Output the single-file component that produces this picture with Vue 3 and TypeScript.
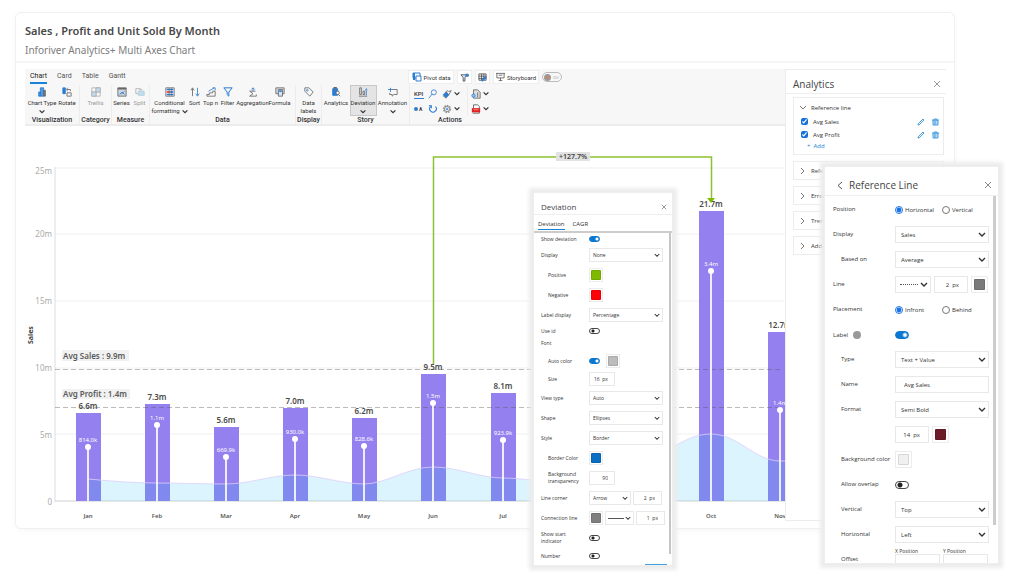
<script setup lang="ts">
import { ref } from 'vue'

interface Tool { icon: string; label: string; second?: string; width: string; more?: boolean; active?: boolean; muted?: boolean }
interface Group { title: string; size: string; tools: Tool[] }
interface Bar { month: string; x: number; top: number; sales: string; dot: number; profit: string }

const tabs = ['Chart', 'Card', 'Table', 'Gantt']

const groups: Group[] = [
  { title: 'Visualization', size: 'g-vis', tools: [
    { icon: 'chart', label: 'Chart Type', width: 'w30', more: true },
    { icon: 'rotate', label: 'Rotate', width: 'w20' } ] },
  { title: 'Category', size: 'g-cat', tools: [{ icon: 'trellis', label: 'Trellis', width: 'w30', muted: true }] },
  { title: 'Measure', size: 'g-mea', tools: [
    { icon: 'series', label: 'Series', width: 'w18' },
    { icon: 'split', label: 'Split', width: 'w18', muted: true } ] },
  { title: 'Data', size: 'g-data', tools: [
    { icon: 'cond', label: 'Conditional', second: 'formatting', width: 'w32', more: true },
    { icon: 'sort', label: 'Sort', width: 'w18' },
    { icon: 'topn', label: 'Top n', width: 'w14' },
    { icon: 'filter', label: 'Filter', width: 'w20' },
    { icon: 'sigma', label: 'Aggregation', width: 'w30' },
    { icon: 'formula', label: 'Formula', width: 'w24' } ] },
  { title: 'Display', size: 'g-dis', tools: [{ icon: 'tag', label: 'Data', second: 'labels', width: 'w24' }] },
  { title: 'Story', size: 'g-sto', tools: [
    { icon: 'analytics', label: 'Analytics', width: 'w27' },
    { icon: 'deviation', label: 'Deviation', width: 'w27', more: true, active: true },
    { icon: 'annotation', label: 'Annotation', width: 'w32', more: true } ] },
]

const ticks = [
  { y: 168, ly: 174, t: '25m' }, { y: 234, ly: 237, t: '20m' }, { y: 301, ly: 304, t: '15m' },
  { y: 368, ly: 371, t: '10m' }, { y: 434, ly: 438, t: '5m' }, { y: 501, ly: 505, t: '0' },
]

const bars: Bar[] = [
  { month: 'Jan', x: 88, top: 413, sales: '6.6m', dot: 447, profit: '814.0k' },
  { month: 'Feb', x: 157, top: 404, sales: '7.3m', dot: 425, profit: '1.1m' },
  { month: 'Mar', x: 226, top: 427, sales: '5.6m', dot: 457, profit: '669.9k' },
  { month: 'Apr', x: 295, top: 408, sales: '7.0m', dot: 439, profit: '930.0k' },
  { month: 'May', x: 364, top: 418, sales: '6.2m', dot: 446, profit: '828.6k' },
  { month: 'Jun', x: 433, top: 374, sales: '9.5m', dot: 403, profit: '1.5m' },
  { month: 'Jul', x: 503, top: 393, sales: '8.1m', dot: 440, profit: '923.9k' },
  { month: 'Oct', x: 711, top: 211, sales: '21.7m', dot: 271, profit: '3.4m' },
  { month: 'Nov', x: 780, top: 332, sales: '12.7m', dot: 410, profit: '1.4m' },
]

const curve = 'M88 479C110 481 135 483 157 483S204 484 226 484S272 475 295 475S342 484 364 484S408 467 433 467S480 478 503 478S550 484 572 482S618 476 641 466S684 434 711 434S755 461 780 461L800 461'

const closed = ['Reference band', 'Error bars', 'Trend line', 'Additional']
const position = ref('h')
const placement = ref('f')
</script>

<template>
  <div class="page">
    <main class="card">
      <header class="head">
        <h1>Sales , Profit and Unit Sold By Month</h1>
        <h2>Inforiver Analytics+ Multi Axes Chart</h2>
      </header>
      <div class="body">
        <section class="main">
          <div class="ribbon">
            <div class="ribbon-top">
              <nav class="tabs">
                <button v-for="(t, i) in tabs" :key="t" type="button" :class="{ on: i === 0 }">{{ t }}</button>
              </nav>
              <button class="chip wide" type="button">
                <svg width="10" height="10" viewBox="0 0 10 10"><path d="M1 1h7v5H1z" fill="#fff" stroke="#2b7cd3" /><path d="M1 1h2v7H1z" fill="#2b7cd3" /><path d="M4 4h5v5H4z" fill="#fff" stroke="#2b7cd3" /></svg>
                Pivot data
              </button>
              <button class="chip" type="button" aria-label="Filter data">
                <svg width="9" height="9" viewBox="0 0 10 10"><path d="M1 2h7L5.500 5v4h-2V5z" fill="#d8e8f8" stroke="#555" /><circle cx="8" cy="2.500" r="2" fill="#3b82c4" /></svg>
              </button>
              <button class="chip" type="button" aria-label="Edit table">
                <svg width="9" height="9" viewBox="0 0 10 10"><path d="M1 1h8v7H1zM1 3.500h8M1 6h8M4 1v7M6.500 1v7" fill="none" stroke="#555" /><path d="M4 9l5-5" stroke="#2b7cd3" stroke-width="2" /></svg>
              </button>
              <button class="chip wide" type="button">
                <svg width="9" height="10" viewBox="0 0 10 10"><path d="M0 1h10M1 1v5h8V1M5 6v3M3 9h4M3 3h4" fill="none" stroke="#666" /></svg>
                Storyboard
              </button>
              <button class="off" type="button" role="switch" aria-checked="false"><i></i>Off</button>
            </div>
            <div class="groups">
              <section v-for="g in groups" :key="g.title" class="group" :class="g.size">
                <div class="tools">
                  <button v-for="t in g.tools" :key="t.label" type="button" class="tool" :class="[t.width, { active: t.active, muted: t.muted }]">
                    <svg class="ico" viewBox="0 0 12 12" fill="none" stroke="#666">
                      <template v-if="t.icon === 'chart'"><path d="M2 6h2v5H2zM4 1h4v10H4z" fill="#4a9be0" stroke="#2b7cd3" /><path d="M8 4h2v7H8z" fill="#777" /></template>
                      <template v-else-if="t.icon === 'rotate'"><path d="M1 1h3v7H1z" fill="#2b7cd3" stroke="#2b7cd3" /><path d="M6 3h4v2M7 1L5 3l2 2M6 7h5v4H6z" /></template>
                      <template v-else-if="t.icon === 'trellis'"><path d="M1 1h10v10H1zM6 1v10M1 6h10" /><path d="M6 1h5v5H6zM1 6h5v5H1z" fill="#8ec3ee" /></template>
                      <template v-else-if="t.icon === 'series'"><path d="M1 1h10v10H1z" fill="#cfd6dc" /><path d="M1 2h10" stroke-width="2" /><path d="M3 9l3-3 3 3M9 5L5 9" stroke="#2b7cd3" /></template>
                      <template v-else-if="t.icon === 'split'"><path d="M1 2h5v6H1zM6 2l3 2" /><path d="M4 5h7v5H4z" fill="#8ec3ee" stroke="#6ab" /></template>
                      <template v-else-if="t.icon === 'cond'"><path d="M1 1h10v10H1z" fill="#fff" /><path d="M2 3h8M2 9h8" stroke="#2b7cd3" stroke-width="2" /><path d="M2 6h4" stroke="#e33" stroke-width="2" /><path d="M6 6h4" stroke="#2b7cd3" stroke-width="2" /><path d="M5 1v10M8 1v10" stroke="#555" stroke-opacity=".6" /></template>
                      <template v-else-if="t.icon === 'sort'"><path d="M3 11V2M1 4l2-3 2 3" /><path d="M9 1v9M7 8l2 3 2-3" stroke="#2b7cd3" /></template>
                      <template v-else-if="t.icon === 'topn'"><path d="M1 11V9h3V7h4V5h3v6z" /><path d="M8 1h3v3M3 5l7-4" stroke="#2b7cd3" /></template>
                      <template v-else-if="t.icon === 'filter'"><path d="M1 1h10L7 6v5L5 9V6z" stroke="#2b7cd3" stroke-width="1.200" /></template>
                      <template v-else-if="t.icon === 'sigma'"><path d="M10 9v2H2l4-3-4-3h7" /><path d="M6 5V1M4 3l2-2 2 2" stroke="#2b7cd3" /></template>
                      <template v-else-if="t.icon === 'formula'"><path d="M1 1h10v7H1z" fill="#ddd" /><path d="M4 3h5v8H4z" fill="#cde3f6" /><path d="M5 5h3" stroke="#2b7cd3" stroke-width="2" /></template>
                      <template v-else-if="t.icon === 'tag'"><path d="M1 1h5l5 5-4 5-6-6z" /><circle cx="4" cy="4" r="1" stroke="#2b7cd3" /></template>
                      <template v-else-if="t.icon === 'analytics'"><path d="M2 2h6v8H2z" fill="#2b7cd3" stroke="#2b7cd3" /><path d="M3 1h4" stroke-width="2" /><circle cx="8" cy="7" r="2" fill="#fff" /><path d="M9 9l2 2" /></template>
                      <template v-else-if="t.icon === 'deviation'"><path d="M2 1h2v8H2zM6 5h2v4H6zM1 11h10" /><path d="M10 4v6M9 4l1-2 1 2" stroke="#2b7cd3" /></template>
                      <template v-else><path d="M6 3h5v6H7l-2 2V9H2V7" /><path d="M3 1v5M0 3h6" stroke="#2b7cd3" /></template>
                    </svg>
                    <span>{{ t.label }}</span>
                    <span v-if="t.second || t.more" class="line2">{{ t.second }}<svg v-if="t.more" width="6" height="5" viewBox="0 0 10 8"><path d="M1 2l4 4 4-4" fill="none" stroke="#333" stroke-width="2" /></svg></span>
                  </button>
                </div>
                <h3>{{ g.title }}</h3>
              </section>
              <section class="group g-act">
                <div class="acts">
                  <button type="button" class="kpi">KPI</button>
                  <button type="button" aria-label="Search"><svg width="10" height="10" viewBox="0 0 12 12" fill="none" stroke="#2b7cd3"><circle cx="7" cy="4" r="3" /><path d="M5 6l-4 5" /></svg></button>
                  <button type="button" aria-label="Format"><svg width="10" height="10" viewBox="0 0 12 12"><path d="M1 7l4-4 4 4-4 4z" fill="#2b7cd3" /><path d="M5 3l3 4 3-5-3 1-1-1zM1 8l4 3" fill="#fff" stroke="#666" /></svg><svg width="6" height="5" viewBox="0 0 10 8"><path d="M1 2l4 4 4-4" fill="none" stroke="#333" stroke-width="2" /></svg></button>
                  <button type="button" aria-label="Export" class="sep"><svg width="10" height="10" viewBox="0 0 12 12"><path d="M3 1h5l3 3v7H3z" fill="#ddd" stroke="#666" /><path d="M8 4v6" stroke="#666" /><circle cx="3" cy="8" r="2" fill="#9cc8ee" stroke="#2b7cd3" /></svg><svg width="6" height="5" viewBox="0 0 10 8"><path d="M1 2l4 4 4-4" fill="none" stroke="#333" stroke-width="2" /></svg></button>
                  <button type="button" class="oa"><i></i>A</button>
                  <button type="button" aria-label="Reset"><svg width="10" height="10" viewBox="0 0 12 12" fill="none" stroke="#2b7cd3"><path d="M3 3a4 4 0 1 0 6 0M1 2h3v3" stroke-width="1.300" /></svg></button>
                  <button type="button" aria-label="Settings"><svg width="10" height="10" viewBox="0 0 12 12" fill="none"><circle cx="6" cy="6" r="4" stroke="#999" stroke-width="2" stroke-dasharray="2 1" /><circle cx="6" cy="6" r="3" fill="#fff" stroke="#777" /><circle cx="6" cy="6" r="1" stroke="#2b7cd3" /></svg><svg width="6" height="5" viewBox="0 0 10 8"><path d="M1 2l4 4 4-4" fill="none" stroke="#333" stroke-width="2" /></svg></button>
                  <button type="button" aria-label="Export to PDF" class="sep"><svg width="10" height="10" viewBox="0 0 12 12"><path d="M3 5V1h5l2 2v2M2 11h8V8" fill="#fff" stroke="#555" /><path d="M1 5h10v5H1z" fill="#d22" /><path d="M3 7h6" stroke="#f99" /></svg><svg width="6" height="5" viewBox="0 0 10 8"><path d="M1 2l4 4 4-4" fill="none" stroke="#333" stroke-width="2" /></svg></button>
                </div>
                <h3>Actions</h3>
              </section>
            </div>
          </div>

          <svg class="chart" viewBox="25 126 760 395" role="img" aria-label="Sales by month">
            <line v-for="k in ticks" :key="k.t" x1="55" x2="785" :y1="k.y" :y2="k.y" stroke="#f0f0f0" />
            <line x1="55" x2="55" y1="167" y2="502" stroke="#dcdcdc" />
            <line x1="55" x2="785" y1="501" y2="501" stroke="#d8d8d8" />
            <text v-for="k in ticks" :key="k.t" x="52" :y="k.ly" class="tick">{{ k.t }}</text>
            <text class="axis" transform="translate(33 344) rotate(-90)">Sales</text>
            <rect v-for="b in bars" :key="b.month" :x="b.x - 12" :y="b.top" width="25" :height="501 - b.top" fill="#9480ee" />
            <path :d="curve + 'V501H88Z'" fill="#28b9f0" fill-opacity=".16" />
            <path :d="curve" fill="none" stroke="#dccffa" stroke-opacity=".8" />
            <line x1="55" x2="783" y1="369.500" y2="369.500" class="dash" />
            <line x1="55" x2="783" y1="407.500" y2="407.500" class="dash" />
            <g fill="#f1f1f1"><rect x="62" y="350" width="67" height="11" /><rect x="62" y="389" width="68" height="10" /></g>
            <text x="63" y="359" class="avg">Avg Sales : 9.9m</text>
            <text x="63" y="397" class="avg">Avg Profit : 1.4m</text>
            <g v-for="b in bars" :key="b.month">
              <line :x1="b.x" :x2="b.x" :y1="b.dot" y2="501" stroke="#fff" stroke-width="2" stroke-opacity=".85" />
              <circle :cx="b.x" :cy="b.dot" r="3" fill="#fff" />
              <text :x="b.x" :y="b.dot - 5" class="profit">{{ b.profit }}</text>
              <text :x="b.x" :y="b.top - 4" class="sales">{{ b.sales }}</text>
              <text :x="b.x" y="518" class="month">{{ b.month }}</text>
            </g>
            <path d="M433.500 364V157H711.500V199" fill="none" stroke="#8cc22e" stroke-width="1.500" />
            <path d="M707 198h8l-4 5z" fill="#7fba00" />
            <rect x="556" y="152" width="34" height="9" fill="#e2e2e2" />
            <text x="573" y="159" class="delta">+127.7%</text>
          </svg>
        </section>

        <aside class="analytics">
          <div class="a-head">
            <h2>Analytics</h2>
            <button class="close" type="button" aria-label="Close analytics"><svg width="8" height="8" viewBox="0 0 8 8"><path d="M1 1l6 6M7 1L1 7" stroke="#999" /></svg></button>
          </div>
          <div class="a-box">
            <button type="button" class="a-title"><svg width="8" height="6" viewBox="0 0 8 6"><path d="M1 1l3 3 3-3" fill="none" stroke="#777" /></svg>Reference line</button>
            <div v-for="n in ['Avg Sales', 'Avg Profit']" :key="n" class="a-row">
              <label><input type="checkbox" checked />{{ n }}</label>
              <button type="button" :aria-label="'Edit ' + n"><svg width="8" height="8" viewBox="0 0 8 8"><path d="M1 7V6l5-5 1 1-5 5z" fill="none" stroke="#4a9fe0" /></svg></button>
              <button type="button" :aria-label="'Delete ' + n"><svg width="7" height="8" viewBox="0 0 7 8"><path d="M1 2h5v5H1z" fill="#b5d8f5" stroke="#4a9fe0" /><path d="M0 2h7M2 1h3M3 3v4" fill="none" stroke="#4a9fe0" /></svg></button>
            </div>
            <button type="button" class="add">+&nbsp; Add</button>
          </div>
          <button v-for="c in closed" :key="c" type="button" class="a-closed"><svg width="6" height="8" viewBox="0 0 6 8"><path d="M1 1l3 3-3 3" fill="none" stroke="#777" /></svg>{{ c }}</button>
        </aside>
      </div>
    </main>

    <section class="panel dev">
      <header class="p-head">
        <h2>Deviation</h2>
        <button class="close" type="button" aria-label="Close deviation"><svg width="6" height="6" viewBox="0 0 8 8"><path d="M1 1l6 6M7 1L1 7" stroke="#777" /></svg></button>
      </header>
      <nav class="p-tabs"><button type="button" class="on">Deviation</button><button type="button">CAGR</button></nav>
      <div class="scroll">
        <div class="rows">
          <div class="row low"><label for="d1">Show deviation</label><div><input id="d1" type="checkbox" role="switch" class="sw" checked /></div></div>
          <div class="row"><label for="d2">Display</label><div><span class="sel"><select id="d2"><option>None</option></select><svg viewBox="0 0 8 6"><path d="M1 1l3 3 3-3" /></svg></span></div></div>
          <div class="row in"><label for="d3">Positive</label><div><input id="d3" type="color" value="#7fba00" /></div></div>
          <div class="row in"><label for="d4">Negative</label><div><input id="d4" type="color" value="#ff0008" /></div></div>
          <div class="row"><label for="d5">Label display</label><div><span class="sel"><select id="d5"><option>Percentage</option></select><svg viewBox="0 0 8 6"><path d="M1 1l3 3 3-3" /></svg></span></div></div>
          <div class="row low"><label for="d6">Use id</label><div><input id="d6" type="checkbox" role="switch" class="sw" /></div></div>
          <div class="row low"><span class="name">Font</span></div>
          <div class="row high in"><label for="d7">Auto color</label><div><input id="d7" type="checkbox" role="switch" class="sw" checked /><input type="color" value="#bdbdbd" aria-label="Font color" /></div></div>
          <div class="row low in"><label for="d8">Size</label><div><input id="d8" class="num short" value="16  px" /></div></div>
          <div class="row gap"><label for="d9">View type</label><div><span class="sel"><select id="d9"><option>Auto</option></select><svg viewBox="0 0 8 6"><path d="M1 1l3 3 3-3" /></svg></span></div></div>
          <div class="row"><label for="d10">Shape</label><div><span class="sel"><select id="d10"><option>Ellipses</option></select><svg viewBox="0 0 8 6"><path d="M1 1l3 3 3-3" /></svg></span></div></div>
          <div class="row"><label for="d11">Style</label><div><span class="sel"><select id="d11"><option>Border</option></select><svg viewBox="0 0 8 6"><path d="M1 1l3 3 3-3" /></svg></span></div></div>
          <div class="row in"><label for="d12">Border Color</label><div><input id="d12" type="color" value="#0a6fc2" /></div></div>
          <div class="row in"><label for="d13">Background transparency</label><div><input id="d13" class="num short" value="90" /></div></div>
          <div class="row"><label for="d14">Line corner</label><div><span class="sel mid"><select id="d14"><option>Arrow</option></select><svg viewBox="0 0 8 6"><path d="M1 1l3 3 3-3" /></svg></span><input class="num" value="2  px" aria-label="Corner width" /></div></div>
          <div class="row"><label for="d15">Connection line</label><div><input id="d15" type="color" value="#7f7f7f" /><span class="sel line"><select aria-label="Connection style"><option>Solid</option></select><i class="rule solid"></i><svg viewBox="0 0 8 6"><path d="M1 1l3 3 3-3" /></svg></span><input class="num" value="1  px" aria-label="Connection width" /></div></div>
          <div class="row"><label for="d16">Show start<br />indicator</label><div><input id="d16" type="checkbox" role="switch" class="sw" /></div></div>
          <div class="row last"><label for="d17">Number</label><div><input id="d17" type="checkbox" role="switch" class="sw" /></div></div>
        </div>
        <i class="bar"></i>
      </div>
      <footer><button type="button" aria-label="Apply"></button></footer>
    </section>

    <section class="panel refl">
      <header class="p-head">
        <button class="close" type="button" aria-label="Back"><svg width="6" height="9" viewBox="0 0 6 9"><path d="M5 1L1 4.500 5 8" fill="none" stroke="#555" /></svg></button>
        <h2>Reference Line</h2>
        <button class="close end" type="button" aria-label="Close reference line"><svg width="8" height="8" viewBox="0 0 8 8"><path d="M1 1l6 6M7 1L1 7" stroke="#888" /></svg></button>
      </header>
      <div class="scroll">
        <div class="rows">
          <div class="row"><span class="name">Position</span><div class="radios"><label><input v-model="position" type="radio" name="pos" value="h" />Horizontal</label><label><input v-model="position" type="radio" name="pos" value="v" />Vertical</label></div></div>
          <div class="row"><label for="r1">Display</label><div><span class="sel"><select id="r1"><option>Sales</option></select><svg viewBox="0 0 8 6"><path d="M1 1l3 3 3-3" /></svg></span></div></div>
          <div class="row in"><label for="r2">Based on</label><div><span class="sel"><select id="r2"><option>Average</option></select><svg viewBox="0 0 8 6"><path d="M1 1l3 3 3-3" /></svg></span></div></div>
          <div class="row"><label for="r3">Line</label><div><span class="sel line"><select id="r3"><option>Dotted</option></select><i class="rule"></i><svg viewBox="0 0 8 6"><path d="M1 1l3 3 3-3" /></svg></span><input class="num" value="2  px" aria-label="Line width" /><input type="color" value="#7a7a7a" aria-label="Line color" /></div></div>
          <div class="row"><span class="name">Placement</span><div class="radios"><label><input v-model="placement" type="radio" name="pla" value="f" />Infront</label><label><input v-model="placement" type="radio" name="pla" value="b" />Behind</label></div></div>
          <div class="row"><label for="r4">Label <i class="info"></i></label><div><input id="r4" type="checkbox" role="switch" class="sw" checked /></div></div>
          <div class="row in"><label for="r5">Type</label><div><span class="sel"><select id="r5"><option>Text + Value</option></select><svg viewBox="0 0 8 6"><path d="M1 1l3 3 3-3" /></svg></span></div></div>
          <div class="row in"><label for="r6">Name</label><div><input id="r6" class="txt" value="Avg Sales" /></div></div>
          <div class="row in"><label for="r7">Format</label><div><span class="sel"><select id="r7"><option>Semi Bold</option></select><svg viewBox="0 0 8 6"><path d="M1 1l3 3 3-3" /></svg></span></div></div>
          <div class="row in"><span class="name"></span><div><input class="num" value="14  px" aria-label="Font size" /><input type="color" value="#6b1c26" aria-label="Font color" /></div></div>
          <div class="row in"><label for="r8">Background color</label><div><input id="r8" type="color" value="#f0f0f0" /></div></div>
          <div class="row in"><label for="r9">Allow overlap</label><div><input id="r9" type="checkbox" role="switch" class="sw" /></div></div>
          <div class="row in"><label for="r10">Vertical</label><div><span class="sel"><select id="r10"><option>Top</option></select><svg viewBox="0 0 8 6"><path d="M1 1l3 3 3-3" /></svg></span></div></div>
          <div class="row in"><label for="r11">Horizontal</label><div><span class="sel"><select id="r11"><option>Left</option></select><svg viewBox="0 0 8 6"><path d="M1 1l3 3 3-3" /></svg></span></div></div>
          <div class="row in offset"><span class="name">Offset</span><div><label>X Position<input class="txt" /></label><label>Y Position<input class="txt" /></label></div></div>
        </div>
        <i class="bar"></i>
      </div>
    </section>
  </div>
</template>

<style>
body { margin: 0; background: #fff; overflow: hidden; }
</style>

<style scoped>
* { box-sizing: border-box; }
.page { position: relative; padding: 12px 69px 47px 15px; font-family: "Open Sans", "Noto Sans", sans-serif; font-size: 6px; color: #333; }
h1, h2, h3 { margin: 0; font-weight: 400; }
button, input, select { font: inherit; color: inherit; margin: 0; padding: 0; border: 0; background: none; }
button { display: flex; align-items: center; }
svg { display: block; flex: none; }
.card { border: 1px solid #f0f0f0; border-radius: 6px; box-shadow: 0 2px 6px #00000008; background: #fff; }
.head { padding: 9px 9px 1px; border-bottom: 2px solid #f6f6f6; font-family: "Noto Sans", sans-serif; }
.head h1 { font-size: 11px; line-height: 18px; font-weight: 600; color: #484848; }
.head h2 { font-size: 10px; line-height: 20px; color: #7c7c7c; }
.body { display: flex; padding: 6px 8px 7px 9px; }
.main { flex: 1; min-width: 0; }
.chart { width: 100%; height: auto; font-family: "Noto Sans", sans-serif; }
.ribbon { height: 57px; background: #f7f7f7; border-bottom: 2px solid #ececec; font-family: Roboto, sans-serif; }
.ribbon-top { display: flex; gap: 3px; height: 16px; align-items: center; }
.tabs { display: flex; gap: 10px; width: 380px; padding-left: 5px; font-size: 7px; }
.tabs button { height: 13px; border-bottom: 2px solid transparent; color: #555; }
.tabs .on { border-color: #1683d8; color: #222; }
.chip { height: 14px; width: 15px; gap: 2px; justify-content: center; background: #fff; border: 1px solid #eee; white-space: nowrap; }
.chip.wide { width: 46px; }
.off { height: 10px; width: 20px; border: 1px solid #bbb; border-radius: 5px; font-size: 4px; color: #aaa; gap: 2px; padding-left: 1px; }
.off i { width: 7px; height: 7px; border-radius: 50%; border: 2px solid #999; background: #d9805c; }
.groups { display: flex; height: 39px; }
.group { display: flex; flex-direction: column; justify-content: space-between; border-right: 1px solid #ececec; }
.group h3 { text-align: center; line-height: 8px; font-weight: 500; color: #333; }
.g-vis { width: 55px; } .g-cat { width: 32px; } .g-mea { width: 38px; } .g-data { width: 146px; }
.g-dis { width: 26px; } .g-sto { width: 88px; } .g-act { width: 80px; border: 0; }
.tools { display: flex; justify-content: center; height: 31px; }
.tool { flex-direction: column; padding-top: 2px; line-height: 8px; white-space: nowrap; gap: 1px; }
.tool .ico { width: 10px; height: 10px; margin-bottom: 1px; }
.tool .line2 { display: flex; align-items: center; gap: 2px; min-height: 8px; margin-top: -1px; }
.tool.active { background: #e4e4e4; border: 1px solid #c8c8c8; padding-top: 1px; }
.tool.muted { opacity: .5; }
.w14 { width: 14px; } .w18 { width: 18px; } .w20 { width: 20px; } .w24 { width: 24px; } .w27 { width: 27px; } .w30 { width: 30px; } .w32 { width: 32px; }
.acts { display: grid; grid-template-columns: 14px 14px 25px 27px; grid-auto-rows: 15px; height: 31px; padding: 1px 0 0 4px; }
.acts button { justify-content: flex-start; gap: 2px; }
.acts .sep { border-left: 1px solid #ececec; padding-left: 3px; }
.acts .kpi { height: 10px; align-self: center; width: 10px; border-bottom: 1px solid #2b7cd3; font-weight: 500; }
.oa { font-size: 5px; font-weight: 700; }
.acts .oa { gap: 1px; }
.oa i { width: 4px; height: 4px; border-radius: 50%; background: #2b7cd3; }
.tick { font-size: 8px; fill: #aaa; text-anchor: end; }
.axis { font-size: 7px; font-weight: 700; fill: #444; }
.dash { stroke: #555; stroke-opacity: .4; stroke-dasharray: 5 3; }
.avg { font-size: 8px; font-weight: 600; fill: #5a5a5a; }
.sales { font-size: 8px; font-weight: 600; fill: #4a4a4a; text-anchor: middle; }
.profit { font-size: 6px; fill: #fff; text-anchor: middle; }
.month { font-size: 6px; font-weight: 600; fill: #555; text-anchor: middle; }
.delta { font-size: 7px; font-weight: 600; fill: #444; text-anchor: middle; }

.analytics { flex: 0 0 161px; border: 1px solid #ececec; border-width: 1px 0 1px 1px; }
.a-head { display: flex; align-items: center; justify-content: space-between; height: 24px; padding: 4px 5px 0 7px; border-bottom: 1px solid #eee; }
.a-head h2 { font-size: 10px; color: #444; }
.a-box { margin: 3px 2px 6px 7px; height: 58px; padding: 3px 4px 0 5px; border: 1px solid #ececec; }
.a-title { gap: 4px; height: 14px; }
.a-row { display: flex; align-items: center; height: 13px; padding-left: 2px; }
.a-row label { display: flex; align-items: center; gap: 5px; flex: 1; }
.a-row input { width: 7px; height: 7px; accent-color: #1670d8; }
.a-row button + button { margin-left: 7px; }
.add { margin-left: 8px; height: 10px; color: #1683d8; }
.a-closed { display: flex; width: 151px; margin: 0 2px 6px 7px; height: 19px; padding-left: 6px; gap: 5px; border: 1px solid #ececec; }

.panel { position: absolute; background: #fff; display: flex; flex-direction: column; overflow: hidden; box-shadow: 0 0 0 1px #eee, 0 0 4px 5px #ececec; color: #333; }
.dev { left: 534px; top: 193px; width: 138px; height: 372px; }
.refl { right: 26px; top: 167px; width: 173px; height: 396px; }
.p-head { display: flex; align-items: center; border-bottom: 1px solid #eee; flex: none; color: #444; }
.dev .p-head { height: 22px; padding: 6px 5px 0 7px; justify-content: space-between; }
.dev h2 { font-size: 8px; }
.refl .p-head { height: 29px; padding: 8px 6px 0 12px; gap: 6px; }
.refl h2 { font-size: 10px; }
.end { margin-left: auto; }
.p-tabs { display: flex; gap: 8px; height: 18px; padding: 4px 4px 0; border-bottom: 2px solid #ccc; flex: none; }
.p-tabs button { height: 11px; border-bottom: 1px solid transparent; }
.p-tabs .on { border-color: #1683d8; }
.scroll { display: flex; flex: 1; min-height: 0; overflow: hidden; }
.rows { flex: 1; min-width: 0; }
.bar { width: 3px; height: 329px; background: #ccc; margin: 0 2px 0 0; flex: none; }
.dev .bar { width: 2px; height: 321px; margin-right: 1px; background: #c4c4c4; }
.row { display: flex; align-items: center; height: 25px; padding-left: 8px; }
.row > label, .row > .name { width: 62px; line-height: 7px; flex: none; }
.row.in { padding-left: 16px; }
.row.in > label, .row.in > .name { width: 54px; white-space: nowrap; }
.row > div { display: flex; align-items: center; gap: 3px; width: 94px; }
.dev .row { height: 20px; padding-left: 7px; font-size: 5px; }
.dev .row > label, .dev .row > .name { width: 48px; font-weight: 500; }
.dev .row.in { padding-left: 14px; }
.dev .row.in > label { width: 41px; white-space: normal; }
.dev .row > div { width: 74px; gap: 2px; }
.dev .row.low { height: 12px; }
.dev .row.high { height: 24px; }
.dev .row.gap { margin-top: 3px; }
.dev .row.last { height: 16px; }
.refl .rows { padding-top: 1px; }
.sel { display: grid; flex: 1; align-items: center; }
.sel > * { grid-area: 1 / 1; }
.sel select { appearance: none; height: 17px; width: 100%; padding-left: 5px; border: 1px solid #e8e8e8; background: #fff; }
.sel svg { width: 8px; height: 6px; justify-self: end; margin-right: 3px; fill: none; stroke: #333; stroke-width: 1.4; pointer-events: none; }
.dev .sel select { height: 14px; padding-left: 3px; }
.dev .sel svg { width: 6px; height: 5px; }
.dev .mid { flex: 0 0 42px; }
.sel.line select { color: transparent; }
.refl .sel.line { flex: 0 0 36px; }
.dev .sel.line { flex: 0 0 29px; }
.rule { width: 18px; margin-left: 5px; border-top: 1px dotted #555; pointer-events: none; }
.rule.solid { width: 16px; margin-left: 3px; border-top-style: solid; }
.num, .txt { border: 1px solid #e8e8e8; height: 17px; width: 34px; background: #fff; text-align: right; padding-right: 8px; white-space: pre; }
.txt { width: 100%; text-align: left; padding-left: 8px; }
.dev .num { height: 14px; width: 29px; padding-right: 6px; flex: none; }
.dev .num.short { width: 26px; }
input[type="color"] { appearance: none; width: 17px; height: 17px; padding: 2px; border: 1px solid #ececec; background: #fff; flex: none; }
.dev input[type="color"] { width: 14px; height: 14px; padding: 1px; }
input[type="color"]::-webkit-color-swatch-wrapper { padding: 0; }
input[type="color"]::-webkit-color-swatch { border: 1px solid #0000001a; border-radius: 1px; }
.sw { appearance: none; width: 14px; height: 8px; border: 1px solid #444; border-radius: 4px; background: radial-gradient(circle at 4px 3px, #222 2px, transparent 3px); flex: none; }
.sw:checked { border-color: #0a78d0; background: radial-gradient(circle at 9px 3px, #fff 1px, #0a78d0 3px); }
.dev .sw { width: 11px; height: 6px; border-radius: 3px; background: radial-gradient(circle at 3px 2px, #222 1px, transparent 2px); margin-right: 4px; }
.dev .sw:checked { background: radial-gradient(circle at 7px 2px, #fff 1px, #0a78d0 2px); }
.radios label { display: flex; align-items: center; gap: 2px; width: 47px; white-space: nowrap; }
.radios input { width: 8px; height: 8px; accent-color: #1a73e8; flex: none; }
.row > .radios { gap: 0; }
.info { display: inline-block; width: 8px; height: 8px; border-radius: 50%; background: #999; margin-left: 3px; vertical-align: middle; }
.offset > div label { display: flex; flex-direction: column; font-size: 5px; line-height: 6px; width: 45px; }
.dev footer { height: 5px; flex: none; display: flex; align-items: flex-end; justify-content: flex-end; padding-right: 5px; }
.dev footer button { width: 22px; height: 1px; background: #4a9fe0; }
</style>
